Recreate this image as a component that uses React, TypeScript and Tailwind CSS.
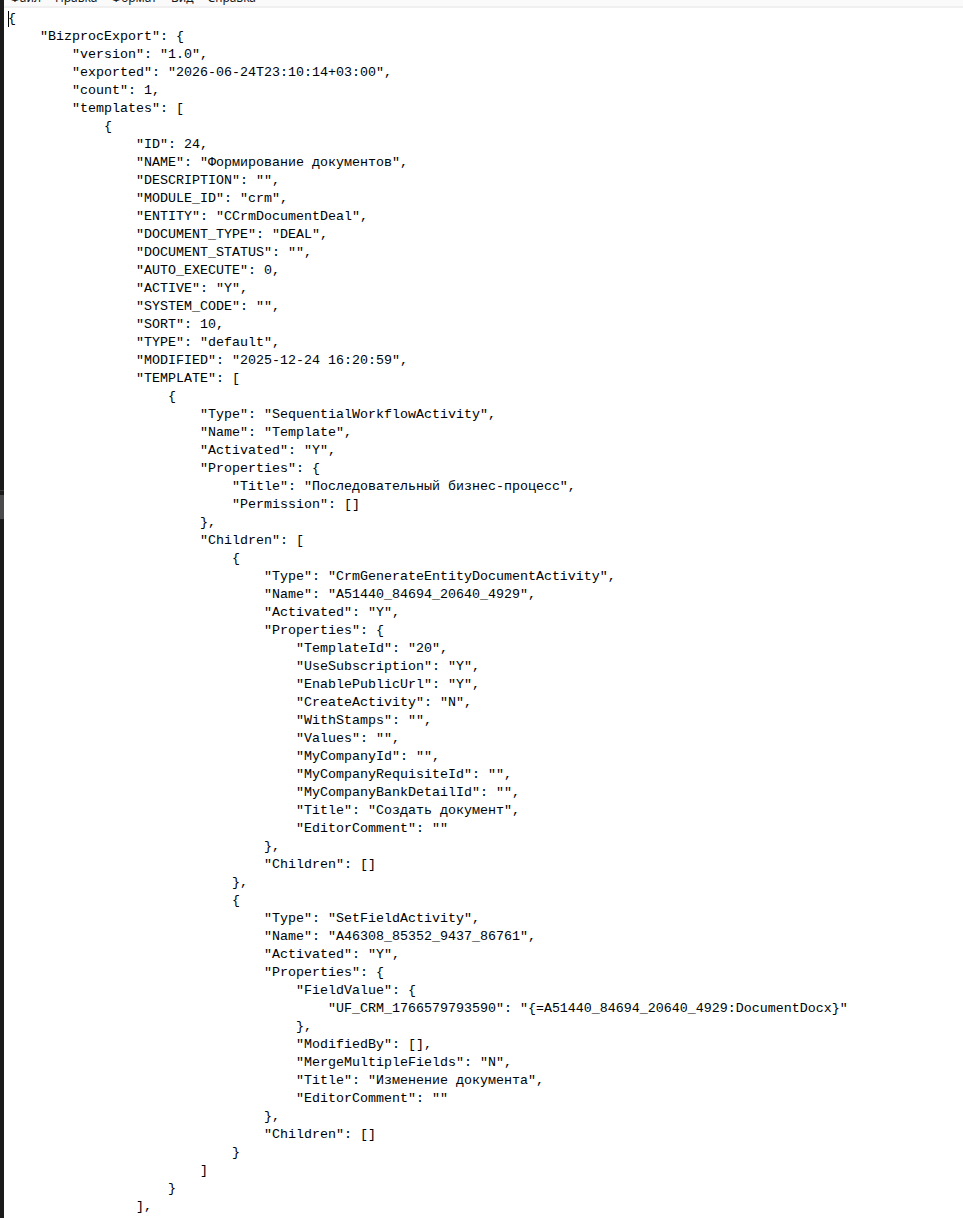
import React from 'react';

const lines: string[] = [
  '{',
  '    "BizprocExport": {',
  '        "version": "1.0",',
  '        "exported": "2026-06-24T23:10:14+03:00",',
  '        "count": 1,',
  '        "templates": [',
  '            {',
  '                "ID": 24,',
  '                "NAME": "Формирование документов",',
  '                "DESCRIPTION": "",',
  '                "MODULE_ID": "crm",',
  '                "ENTITY": "CCrmDocumentDeal",',
  '                "DOCUMENT_TYPE": "DEAL",',
  '                "DOCUMENT_STATUS": "",',
  '                "AUTO_EXECUTE": 0,',
  '                "ACTIVE": "Y",',
  '                "SYSTEM_CODE": "",',
  '                "SORT": 10,',
  '                "TYPE": "default",',
  '                "MODIFIED": "2025-12-24 16:20:59",',
  '                "TEMPLATE": [',
  '                    {',
  '                        "Type": "SequentialWorkflowActivity",',
  '                        "Name": "Template",',
  '                        "Activated": "Y",',
  '                        "Properties": {',
  '                            "Title": "Последовательный бизнес-процесс",',
  '                            "Permission": []',
  '                        },',
  '                        "Children": [',
  '                            {',
  '                                "Type": "CrmGenerateEntityDocumentActivity",',
  '                                "Name": "A51440_84694_20640_4929",',
  '                                "Activated": "Y",',
  '                                "Properties": {',
  '                                    "TemplateId": "20",',
  '                                    "UseSubscription": "Y",',
  '                                    "EnablePublicUrl": "Y",',
  '                                    "CreateActivity": "N",',
  '                                    "WithStamps": "",',
  '                                    "Values": "",',
  '                                    "MyCompanyId": "",',
  '                                    "MyCompanyRequisiteId": "",',
  '                                    "MyCompanyBankDetailId": "",',
  '                                    "Title": "Создать документ",',
  '                                    "EditorComment": ""',
  '                                },',
  '                                "Children": []',
  '                            },',
  '                            {',
  '                                "Type": "SetFieldActivity",',
  '                                "Name": "A46308_85352_9437_86761",',
  '                                "Activated": "Y",',
  '                                "Properties": {',
  '                                    "FieldValue": {',
  '                                        "UF_CRM_1766579793590": "{=A51440_84694_20640_4929:DocumentDocx}"',
  '                                    },',
  '                                    "ModifiedBy": [],',
  '                                    "MergeMultipleFields": "N",',
  '                                    "Title": "Изменение документа",',
  '                                    "EditorComment": ""',
  '                                },',
  '                                "Children": []',
  '                            }',
  '                        ]',
  '                    }',
  '                ],',
  '                              ""',
];

const menu = ['Файл', 'Правка', 'Формат', 'Вид', 'Справка'];

const App: React.FC = () => {
  return (
    <div className="flex h-[1218px] w-full overflow-hidden bg-white">
      {/* window edge behind notepad */}
      <div className="flex w-[4px] shrink-0 flex-col bg-[#1b1b1b]">
        <div className="h-[490px] shrink-0"></div>
        <div className="h-px shrink-0 bg-[#3a3a3a]"></div>
        <div className="h-[4px] shrink-0"></div>
        <div className="h-[24px] shrink-0 bg-[#4a4a4d]"></div>
      </div>

      <div className="flex min-w-0 flex-1 flex-col">
        {/* menu bar, mostly cut off */}
        <div className="h-[8px] shrink-0 overflow-hidden border-b-2 border-[#f0f0f0] bg-[#fafafa]">
          <div className="-mt-[10px] flex gap-[14px] pl-[6px] font-['Noto_Sans',sans-serif] text-[12px] leading-[16px] text-[#1a1a1a]">
            {menu.map((m) => (
              <span key={m}>{m}</span>
            ))}
          </div>
        </div>

        {/* editor */}
        <div className="relative min-h-0 flex-1 overflow-hidden pl-[4px] pt-[2px] font-['Liberation_Mono',monospace] text-[13.333px] text-black">
          <div className="absolute left-[4px] top-[3px] h-[16px] w-px bg-black"></div>
          {lines.map((l, i) => (
            <div key={i} className="h-[18px] whitespace-pre leading-[18px]">
              {l}
            </div>
          ))}
        </div>
      </div>
    </div>
  );
};

export default App;
